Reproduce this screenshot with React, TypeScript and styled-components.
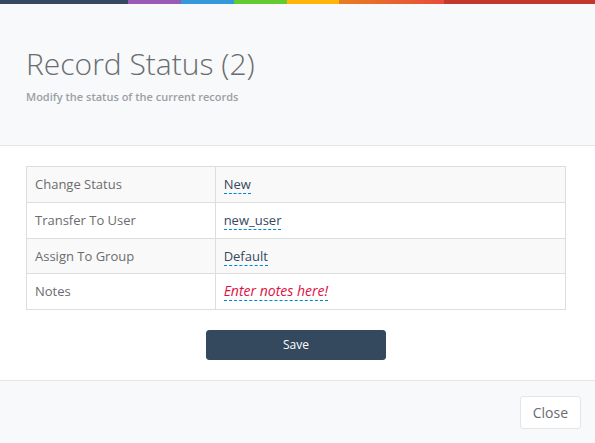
import React from "react";
import styled, { createGlobalStyle } from "styled-components";

const Global = createGlobalStyle`
  html, body { margin: 0; padding: 0; background: #ffffff; }
  body {
    font-family: "Open Sans", "Liberation Sans", sans-serif;
    font-size: 13px;
    color: #6a6c6f;
  }
  * { box-sizing: border-box; }
`;

const Modal = styled.div`
  width: 595px;
  height: 443px;
  display: flex;
  flex-direction: column;
  background: #ffffff;
  overflow: hidden;
`;

const ColorLine = styled.div`
  height: 4px;
  flex: none;
  background: linear-gradient(
    to right,
    #34495e 0, #34495e 128px,
    #9b59b6 128px, #9b59b6 181px,
    #3498db 181px, #3498db 234px,
    #62cb31 234px, #62cb31 287px,
    #ffb606 287px, #ffb606 339px,
    #e67e22 339px, #e74c3c 444px,
    #c0392b 444px, #c0392b 100%
  );
`;

const Header = styled.div`
  background: #f7f9fa;
  border-bottom: 1px solid #e4e5e7;
  padding: 43px 26px 0;
  height: 142px;
  flex: none;
`;

const Title = styled.h4`
  margin: 0;
  font-size: 30px;
  line-height: 33px;
  font-weight: 300;
  color: #6a6c6f;
`;

const Subtitle = styled.small`
  display: block;
  margin-top: 9px;
  font-size: 11px;
  line-height: 15px;
  font-weight: 600;
  color: #9d9fa2;
`;

const Body = styled.div`
  padding: 20px 29px 20px 26px;
  display: flex;
  flex-direction: column;
  align-items: center;
  flex: none;
`;

const Table = styled.table`
  width: 540px;
  border-collapse: collapse;
  border: 1px solid #dddddd;
`;

const Row = styled.tr<{ $striped?: boolean }>`
  background: ${(p) => (p.$striped ? "#f9f9f9" : "#ffffff")};
`;

const LabelCell = styled.td`
  width: 35%;
  padding: 8px;
  line-height: 18.75px;
  border: 1px solid #dddddd;
  color: #6a6c6f;
  font-size: 13px;
  vertical-align: top;
`;

const ValueCell = styled.td`
  padding: 8px;
  line-height: 18.75px;
  border: 1px solid #dddddd;
  font-size: 13px;
  vertical-align: top;
`;

const Editable = styled.a<{ $empty?: boolean }>`
  color: ${(p) => (p.$empty ? "#dd1144" : "#34495e")};
  font-style: ${(p) => (p.$empty ? "italic" : "normal")};
  font-size: ${(p) => (p.$empty ? "14px" : "13px")};
  text-decoration: none;
  border-bottom: 1px dashed #0088cc;
  cursor: pointer;
`;

const SaveButton = styled.button`
  margin-top: 20px;
  width: 180px;
  height: 30px;
  background: #34495e;
  border: 1px solid #34495e;
  border-radius: 3px;
  color: #ffffff;
  font-family: inherit;
  font-size: 12px;
  line-height: 18px;
  padding: 5px 10px;
  cursor: pointer;
`;

const Footer = styled.div`
  flex: 1;
  background: #f7f9fa;
  border-top: 1px solid #e4e5e7;
  padding: 15px 14px 15px 15px;
  display: flex;
  justify-content: flex-end;
  align-items: flex-start;
`;

const CloseButton = styled.button`
  height: 33px;
  padding: 6px 12px;
  background: #ffffff;
  border: 1px solid #e4e5e7;
  border-radius: 3px;
  color: #6a6c6f;
  font-family: inherit;
  font-size: 14px;
  line-height: 19px;
  cursor: pointer;
`;

const rows = [
  { label: "Change Status", value: "New" },
  { label: "Transfer To User", value: "new_user" },
  { label: "Assign To Group", value: "Default" },
  { label: "Notes", value: "Enter notes here!", empty: true },
];

export default function App() {
  return (
    <>
      <Global />
      <Modal>
        <ColorLine />
        <Header>
          <Title>Record Status (2)</Title>
          <Subtitle>Modify the status of the current records</Subtitle>
        </Header>
        <Body>
          <Table>
            <tbody>
              {rows.map((r, i) => (
                <Row key={r.label} $striped={i % 2 === 0}>
                  <LabelCell>{r.label}</LabelCell>
                  <ValueCell>
                    <Editable $empty={r.empty}>{r.value}</Editable>
                  </ValueCell>
                </Row>
              ))}
            </tbody>
          </Table>
          <SaveButton>Save</SaveButton>
        </Body>
        <Footer>
          <CloseButton>Close</CloseButton>
        </Footer>
      </Modal>
    </>
  );
}
